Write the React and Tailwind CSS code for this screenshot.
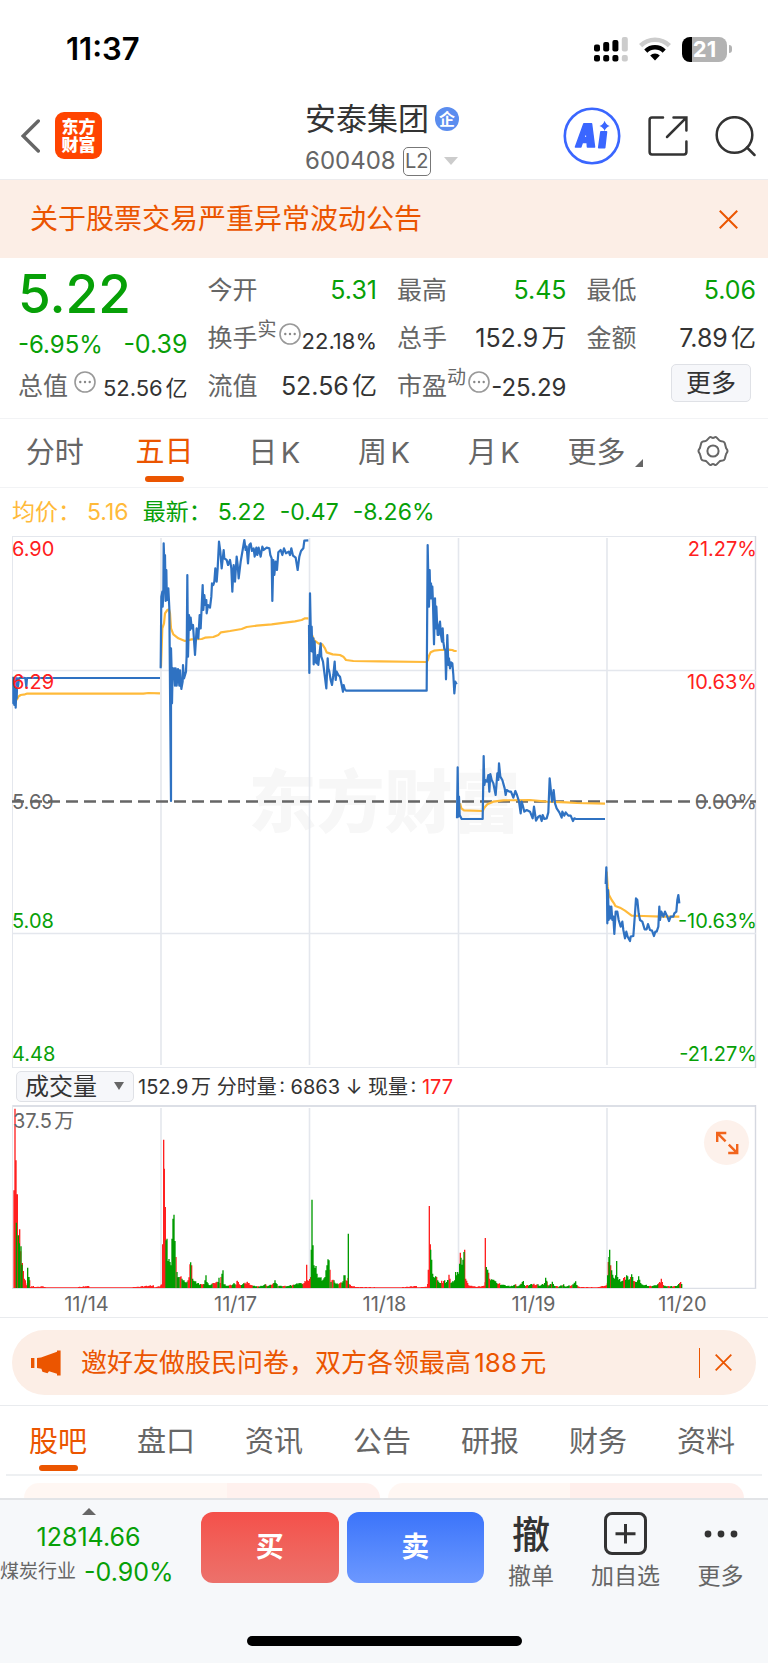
import React from "react";

const FONT = "font-['Inter','Noto_Sans_CJK_SC',sans-serif]";

/* Price lines, one entry per trading day. Units are thirds of a pixel. */
const DAYS = [
  {
    x: 0,
    y: 525,
    price:
      "40,455 40,535 43,460 43,540 47,458 47,548 50,470 50,520 52,460 54,485 57,460 62,458 76,459 79,485 81,459 480,459",
    average: "50,525 55,515 62,510 75,508 80,506 430,506 445,504 480,505",
  },
  {
    x: 0,
    y: 525,
    price:
      "482,430 484,215 487,200 488,245 490,205 491,55 494,150 495,90 497,228 499,135 500,190 502,225 505,190 508,250 511,600 513,828 513,370 515,440 516,535 518,430 521,440 522,430 525,482 527,430 530,482 534,432 538,482 540,436 544,492 548,470 549,420 552,460 558,440 560,390 562,150 564,395 567,270 570,315 572,278 575,310 579,300 585,390 590,310 595,340 599,270 602,310 608,180 610,255 613,210 616,240 619,225 620,265 624,240 630,248 634,215 636,175 640,180 643,170 646,130 650,170 653,130 657,50 661,80 665,130 671,75 673,100 680,105 684,120 690,105 694,130 697,200 701,120 705,170 710,95 713,120 716,160 722,110 728,75 733,45 737,75 740,65 744,115 748,60 752,55 756,78 761,70 764,95 769,68 772,90 776,68 782,95 787,65 791,75 800,68 808,70 811,90 815,100 817,228 820,105 823,150 827,110 831,135 835,82 842,75 847,90 852,70 858,85 866,80 870,90 874,70 879,92 887,98 893,135 898,95 903,78 910,70 913,47 925,46",
    average:
      "483,425 487,310 492,295 495,265 502,255 507,253 510,265 513,310 520,328 535,340 555,348 575,343 605,342 615,338 640,336 655,330 663,322 690,318 725,312 740,306 770,302 815,298 855,293 885,289 905,285 915,280 925,280",
  },
  {
    x: 300,
    y: 525,
    price:
      "27,300 28,444 30,205 32,300 33,378 35,305 37,380 40,340 41,418 44,350 46,410 50,415 53,390 55,420 58,390 62,355 64,395 69,410 74,450 79,490 83,400 85,430 88,440 92,465 96,480 100,450 104,410 107,465 110,440 115,450 120,455 125,480 129,500 131,480 134,492 138,497 380,497 383,60 385,160 387,245 389,135 391,220 393,175 395,220 397,185 399,235 402,358 405,220 407,310 409,245 411,290 413,330 416,330 418,300 420,290 423,330 426,350 428,310 430,350 433,372 436,375 438,463 442,330 445,420 447,400 450,430 453,412 457,415 460,450 463,505 466,470 470,478",
    average:
      "36,330 42,345 55,355 67,358 75,370 80,382 98,388 120,390 130,395 138,405 160,408 240,409 380,411 384,405 387,392 392,382 402,377 420,375 445,374 457,375 463,378 470,378",
  },
  {
    x: 300,
    y: 525,
    price:
      "471,880 473,727 475,875 477,815 479,870 485,882 548,882 551,693 553,780 556,765 561,770 565,750 568,800 571,747 575,765 580,775 587,810 592,745 595,765 597,715 601,755 607,765 614,790 617,810 620,795 628,800 633,800 640,818 646,798 651,810 657,830 662,865 665,830 668,840 673,860 680,855 690,860 698,880 702,845 708,887 715,875 720,872 725,888 728,870 733,882 740,880 745,862 749,760 752,790 756,830 761,795 765,835 770,850 778,862 785,878 787,860 793,872 797,862 805,872 812,872 819,888 823,880 828,882 915,882",
    average:
      "480,835 484,850 492,856 548,858 553,848 562,838 580,830 610,826 690,825 740,830 800,832 830,834 915,836",
  },
  {
    x: 440,
    y: 740,
    price:
      "497,432 499,382 501,460 502,550 504,450 506,540 509,500 511,535 514,500 517,540 520,530 523,582 527,515 532,515 536,540 542,560 547,545 550,570 555,595 559,575 563,590 570,603 572,590 580,588 585,520 588,475 592,480 596,520 600,540 607,545 614,568 620,568 624,552 630,570 636,572 642,588 646,575 650,575 655,560 658,500 660,540 664,515 670,530 675,515 682,530 687,543 692,530 700,530 703,520 709,515 712,480 715,465 718,490",
    average:
      "500,395 503,440 507,465 515,480 522,490 526,498 540,503 555,512 575,527 610,528 665,530 718,530",
  },
];

/* Volume outline: colour, position and height, in thirds of a pixel.
   r = red, g = green, m = alternating. */
const VOLUME =
  "r40:293 r43:538 r46:383 g47:196 r50:281 g53:158 r57:176 g61:125 r65:75 r68:51 r71:28 r74:23 r77:8 g81:61 g85:33 r87:23 r90:3 r98:6 r101:3 r127:5 r130:3 r150:2 r225:2 r264:6 r267:1 r380:1 r458:8 r461:2 r478:5 " +
  "r486:131 r489:445 r491:358 r494:243 g496:143 g499:148 g502:81 g508:78 g511:68 g514:148 g517:208 g520:220 r526:93 g529:48 g535:33 r538:33 r541:35 g544:28 g550:23 g553:18 r562:23 r568:71 g570:77 r573:68 g576:28 g582:20 m590:14 r600:12 g610:11 g613:23 g616:38 g619:18 m625:9 r640:15 g652:18 g655:31 r658:15 r661:33 g664:43 g667:53 g670:11 m680:7 g697:11 g700:15 r706:10 r710:22 r713:18 m720:9 r730:13 r740:19 r745:15 m755:7 g775:4 r795:11 m800:5 g820:15 g823:23 g826:15 m832:7 m860:6 g880:10 g895:15 r905:13 r910:15 r918:70 r921:23 " +
  "g932:115 g934:265 g937:128 g940:68 g946:66 g949:43 g958:31 g967:25 g973:33 g976:53 g979:68 g982:86 g985:83 r988:55 g991:18 r994:23 g1000:23 m1006:12 g1024:16 g1030:38 g1033:38 r1036:23 r1039:21 g1043:163 r1046:11 r1055:5 r1070:3 r1150:2 r1200:2 r1247:6 r1250:2 r1278:4 " +
  "r1283:55 r1286:246 r1289:131 g1290:115 g1293:85 g1296:43 g1302:31 r1308:33 g1311:23 g1317:15 r1323:22 m1326:15 g1332:23 m1335:15 g1342:23 r1345:40 r1348:28 g1351:15 g1362:23 g1365:48 g1371:48 g1374:43 g1377:73 r1379:106 g1381:91 g1387:85 g1390:108 r1392:115 r1395:28 r1401:15 r1404:8 r1425:4 r1450:6 r1454:150 g1457:63 g1461:55 r1464:46 r1467:28 g1470:23 g1476:25 g1479:25 m1488:15 g1510:9 g1530:5 r1545:11 m1549:5 g1562:12 g1568:21 m1572:6 r1600:13 m1603:8 g1612:11 m1616:6 g1632:15 g1635:31 r1639:19 m1643:5 g1655:19 m1660:7 m1675:4 g1689:11 m1693:4 g1718:10 g1725:20 m1729:8 r1737:3 r1790:2 r1817:8 " +
  "g1821:38 r1823:78 g1825:93 g1827:115 r1830:68 g1833:53 g1836:40 m1842:28 g1845:38 g1848:81 g1851:33 g1854:25 m1866:22 r1872:33 g1875:25 g1878:38 m1884:25 g1893:41 g1896:33 r1899:21 g1905:18 g1914:35 g1917:25 m1920:15 g1928:8 g1937:10 m1943:6 m1965:8 r1982:28 r1985:18 m1990:7 m2010:5 m2028:6 r2037:15 r2040:18 g2043:12";

function volumeBars() {
  const keys = VOLUME.split(" ").map((entry) => {
    const [x, h] = entry.slice(1).split(":").map(Number);
    return { kind: entry[0], x, h };
  });
  const bars = { r: "", g: "" };
  const add = (kind, x, h) => {
    bars[kind] += `M${x} 0v-${Math.max(2, Math.round(h))}h4v${Math.max(2, Math.round(h))}z`;
  };
  keys.forEach((key, i) => {
    const next = keys[i + 1];
    const end = next && next.x - key.x < 130 ? next.x : key.x + 1;
    for (let x = key.x, n = 0; x < end; x += 3, n += 1) {
      const t = (x - key.x) / (end - key.x);
      const h = n === 0 || !next ? key.h : key.h + (Math.min(next.h, key.h + 12) - key.h) * t;
      const wobble = n === 0 ? 1 : 0.8 + 0.1 * ((x * 7) % 4);
      const kind = key.kind === "m" ? ((x * 5) % 7 < 3 ? "r" : "g") : key.kind;
      add(kind, x, h * wobble);
    }
  });
  return bars;
}

const BARS = volumeBars();
const DIVIDERS = [161, 309.5, 458.5, 607];

function More() {
  return (
    <svg viewBox="0 0 22 22" className="size-[22px] shrink-0" fill="none" aria-hidden="true">
      <circle cx="11" cy="11" r="10" stroke="#999" strokeWidth="1.6" />
      <circle cx="6.3" cy="11" r="1.2" fill="#888" />
      <circle cx="11" cy="11" r="1.2" fill="#888" />
      <circle cx="15.7" cy="11" r="1.2" fill="#888" />
    </svg>
  );
}

function Close({ className }) {
  return (
    <svg viewBox="0 0 20 20" className={className} fill="none" stroke="#eb5500" strokeWidth="2.1" aria-hidden="true">
      <path d="M0.8 0.8 19.2 19.2M19.2 0.8 0.8 19.2" />
    </svg>
  );
}

function StatusBar() {
  return (
    <div className="flex h-[98px] items-center justify-between pr-9 pl-[66px]">
      <time className="text-[31px] leading-9 font-semibold text-black">11:37</time>
      <div className="flex items-center gap-[11px]">
        <svg viewBox="0 0 34 26" className="h-[26px] w-[34px]" aria-label="信号">
          <g fill="#000">
            <rect x="0" y="8.5" width="6" height="7" rx="2" />
            <rect x="9.2" y="6" width="6" height="9.5" rx="2" />
            <rect x="18.4" y="4" width="6" height="11.5" rx="2" />
            <rect x="0" y="19" width="6" height="6.5" rx="2" />
            <rect x="9.2" y="19" width="6" height="6.5" rx="2" />
            <rect x="18.4" y="19" width="6" height="6.5" rx="2" />
          </g>
          <g fill="#ccc">
            <rect x="27.8" y="1" width="6" height="14.5" rx="2" />
            <rect x="27.8" y="19" width="6" height="6.5" rx="2" />
          </g>
        </svg>
        <svg viewBox="0 0 32 24" className="h-6 w-8" fill="none" aria-label="无线网络">
          <path d="M1.6 8.6A20.5 20.5 0 0 1 30.4 8.6" stroke="#ccc" strokeWidth="4.6" />
          <path d="M6.8 14.1A13 13 0 0 1 25.2 14.1" stroke="#000" strokeWidth="4.4" />
          <path d="M16 23.5 11.2 18.6A6.8 6.8 0 0 1 20.8 18.6Z" fill="#000" />
        </svg>
        <div className="flex items-center gap-[2px]">
          <div className="flex h-[25px] w-[45px] items-center justify-center overflow-hidden rounded-lg bg-[linear-gradient(to_right,#000_10px,#b3b3b3_10px)]">
            <span className="text-[22px] leading-6 font-bold text-white">21</span>
          </div>
          <span className="h-2 w-[3px] rounded-r-full bg-[#b3b3b3]" />
        </div>
      </div>
    </div>
  );
}

function Header() {
  return (
    <header className="grid h-[82px] grid-cols-[1fr_auto_1fr] items-start border-b border-[#ececee] px-3">
      <div className="ml-[9px] flex items-center gap-[15px] pt-[14px]">
        <button type="button" aria-label="返回">
          <svg viewBox="0 0 19 34" className="h-[34px] w-[19px]" fill="none" stroke="#666" strokeWidth="3.4" strokeLinecap="round">
            <path d="M17.3 2 2.2 17 17.3 32" />
          </svg>
        </button>
        <div className="flex size-[47px] flex-col items-center justify-center rounded-[9px] bg-[#ff4400] text-[17px] leading-[18px] font-black text-white">
          <span>东方</span>
          <span>财富</span>
        </div>
      </div>
      <div className="flex flex-col pr-1">
        <h1 className="flex items-center gap-[6px] text-[31px] leading-[42px] text-[#333]">
          安泰集团
          <span className="flex size-6 items-center justify-center rounded-full bg-[#5b8def] text-[16px] leading-6 font-bold text-white">
            企
          </span>
        </h1>
        <button type="button" className="flex h-[42px] items-center gap-[7px] text-[24px] leading-7 text-[#666]">
          600408
          <span className="flex h-[29px] w-7 items-center justify-center rounded-[5px] border border-[#777] text-[20px]">L2</span>
          <svg viewBox="0 0 14 8" className="ml-[6px] h-2 w-[14px]" aria-hidden="true">
            <path d="M0 0H14L7 8Z" fill="#ccc" />
          </svg>
        </button>
      </div>
      <div className="flex items-center justify-end gap-[27px] pt-[9px]">
        <button type="button" aria-label="智能助手">
          <svg viewBox="0 0 58 58" className="size-[58px]" fill="none">
            <circle cx="29" cy="29" r="27.2" stroke="#3a66ff" strokeWidth="2.6" />
            <g fill="#3a66ff" stroke="#3a66ff" strokeLinejoin="round">
              <path
                d="M12.4 40 20.8 16.8H28.6L31.6 40H24.4L24.1 35.6H19.4L17.9 40ZM21 30.8H23.9L23.5 24Z"
                strokeWidth="1.4"
                fillRule="evenodd"
              />
              <path d="M38 24.8H43.4L41.6 40.6H35.8Z" strokeWidth="1.8" />
            </g>
            <path d="M41.6 13.7Q42.8 17.7 46.7 19Q42.8 20.3 41.6 24.1Q40.4 20.3 36.5 19Q40.4 17.7 41.6 13.7Z" fill="#3a66ff" />
          </svg>
        </button>
        <button type="button" aria-label="分享">
          <svg viewBox="0 0 40 40" className="size-10" fill="none" stroke="#333" strokeWidth="2.5" strokeLinecap="round">
            <path d="M15 1.6H4Q1.6 1.6 1.6 4V36Q1.6 38.4 4 38.4H36Q38.4 38.4 38.4 36V25.5M25.5 1.6H38.4V14.5M37.6 2.4 19 21" />
          </svg>
        </button>
        <button type="button" aria-label="搜索">
          <svg viewBox="0 0 41 41" className="size-[41px]" fill="none" stroke="#333" strokeWidth="2.5" strokeLinecap="round">
            <circle cx="19.5" cy="19" r="17.8" />
            <path d="M32 31.5 39.5 39" />
          </svg>
        </button>
      </div>
    </header>
  );
}

function Stat({ label, mark, more, value, tone, size }) {
  return (
    <div className="flex h-12 items-center justify-between whitespace-nowrap">
      <dt className="flex items-center text-[25px] text-[#666]">
        {label}
        {mark && <sup className="text-[19px] leading-6">{mark}</sup>}
        {more && (
          <span className={mark ? "mb-[10px] ml-[2px]" : "mb-[10px] ml-[6px]"}>
            <More />
          </span>
        )}
      </dt>
      <dd className={`${tone} ${size}`}>{value}</dd>
    </div>
  );
}

function Quote() {
  const green = "text-[#07a007]";
  const dark = "text-[#333]";
  return (
    <section className="grid grid-cols-4 gap-x-5 border-b border-[#f2f3f5] pt-[9px] pr-3 pb-[7px] pl-[18px]">
      <div>
        <div className={`h-[60px] text-[53px] leading-[54px] font-medium ${green}`}>5.22</div>
        <div className={`flex h-9 items-center justify-between ${green}`}>
          <span className="text-[24px]">-6.95%</span>
          <span className="text-[25px]">-0.39</span>
        </div>
        <dl>
          <Stat label="总值" more value="52.56亿" tone={dark} size="pt-[2px] text-[22px]" />
        </dl>
      </div>
      <dl>
        <Stat label="今开" value="5.31" tone={green} size="text-[25px]" />
        <Stat label="换手" mark="实" more value="22.18%" tone={dark} size="pt-1 text-[22px]" />
        <Stat label="流值" value="52.56亿" tone={dark} size="text-[25px]" />
      </dl>
      <dl>
        <Stat label="最高" value="5.45" tone={green} size="text-[25px]" />
        <Stat label="总手" value="152.9万" tone={dark} size="text-[25px]" />
        <Stat label="市盈" mark="动" more value="-25.29" tone={dark} size="pt-[2px] text-[24px]" />
      </dl>
      <div>
        <dl>
          <Stat label="最低" value="5.06" tone={green} size="text-[25px]" />
          <Stat label="金额" value="7.89亿" tone={dark} size="text-[25px]" />
        </dl>
        <div className="flex h-10 items-center justify-end pr-[5px]">
          <button type="button" className="h-[38px] w-20 rounded-[5px] border border-[#dfe1e6] bg-[#f6f7fa] text-[25px] leading-9 text-[#333]">
            更多
          </button>
        </div>
      </div>
    </section>
  );
}

function PeriodTabs() {
  return (
    <nav className="grid h-[69px] grid-cols-7 border-b border-[#f2f3f5] text-[29px] leading-[66px] text-[#666]">
      <button type="button">分时</button>
      <button type="button" className="flex flex-col items-center text-[#eb5500]">
        <span className="h-[57px]">五日</span>
        <span className="h-[6px] w-[39px] rounded-full bg-[#eb5500]" />
      </button>
      <button type="button">日K</button>
      <button type="button">周K</button>
      <button type="button">月K</button>
      <button type="button" className="flex items-center justify-center gap-[10px] pl-1">
        更多
        <svg viewBox="0 0 8 8" className="mt-5 size-2" aria-hidden="true">
          <path d="M8 0V8H0Z" fill="#666" />
        </svg>
      </button>
      <button type="button" aria-label="设置" className="flex items-center justify-center pb-1">
        <svg viewBox="0 0 32 32" className="size-8" fill="none" stroke="#666" strokeWidth="2">
          <path
            strokeLinejoin="round"
            d="M12.3 2.6Q13.3 1.6 14.5 2.4Q16 3.4 17.5 2.4Q18.7 1.6 19.7 2.6L22.3 5.4Q23 6.2 24.2 6.2Q27 6 27.8 8.2L28.8 12Q29 13.2 29.8 14.2Q31.2 16 29.8 17.8Q29 18.8 28.8 20L27.8 23.8Q27 26 24.2 25.8Q23 25.8 22.3 26.6L19.7 29.4Q18.7 30.4 17.5 29.6Q16 28.6 14.5 29.6Q13.3 30.4 12.3 29.4L9.7 26.6Q9 25.8 7.8 25.8Q5 26 4.2 23.8L3.2 20Q3 18.8 2.2 17.8Q0.8 16 2.2 14.2Q3 13.2 3.2 12L4.2 8.2Q5 6 7.8 6.2Q9 6.2 9.7 5.4Z"
          />
          <circle cx="16" cy="16" r="5.6" />
        </svg>
      </button>
    </nav>
  );
}

function PriceChart() {
  return (
    <figure className="relative mr-[11px] ml-3 h-[532px]">
      <div className="absolute inset-0 flex items-center justify-center text-[68px] leading-none font-black text-[#f7f7f7] select-none">
        东方财富
      </div>
      <svg viewBox="12 536 745 532" preserveAspectRatio="none" className="absolute inset-0 size-full" fill="none" aria-label="五日走势">
        <g stroke="#e4e7ed">
          <path d="M12 536.5H756M12 1067.5H756M12.5 536V1068" />
          <path d="M755.5 536V1068" stroke="#d5d8e0" strokeWidth="1.4" />
          <path d="M12 670.5H756M12 933.5H756" strokeWidth="1.4" />
          {DIVIDERS.map((x) => (
            <path key={x} d={`M${x} 538V1065`} strokeWidth="1.6" />
          ))}
        </g>
        <path d="M12 801.5H756" stroke="#666" strokeWidth="2.4" strokeDasharray="12 6" />
        {DAYS.map((day, i) => (
          <g key={i} transform={`translate(${day.x} ${day.y}) scale(0.333333)`} strokeLinejoin="round">
            <polyline points={day.average} stroke="#ffba3a" strokeWidth="6.6" />
            <polyline points={day.price} stroke="#2f72c2" strokeWidth="6.6" />
          </g>
        ))}
      </svg>
      <div className="absolute inset-0 text-[20px] leading-[26px] text-[#ff2020]">
        <span className="absolute top-0 left-0">6.90</span>
        <span className="absolute top-0 right-0">21.27%</span>
        <span className="absolute top-[133px] left-0">6.29</span>
        <span className="absolute top-[133px] right-0">10.63%</span>
        <span className="absolute top-[253px] left-0 text-[#666]">5.69</span>
        <span className="absolute top-[253px] right-0 text-[#666]">0.00%</span>
        <span className="absolute top-[372px] left-0 text-[#07a007]">5.08</span>
        <span className="absolute top-[372px] right-0 text-[#07a007]">-10.63%</span>
        <span className="absolute top-[505px] left-0 text-[#07a007]">4.48</span>
        <span className="absolute top-[505px] right-0 text-[#07a007]">-21.27%</span>
      </div>
    </figure>
  );
}

function VolumeChart() {
  return (
    <section>
      <div className="flex h-[37px] items-center pl-4 text-[20px] text-[#333]">
        <div className="relative">
          <select
            aria-label="指标"
            className="block h-[31px] w-[118px] appearance-none rounded-[5px] border border-[#dfe1e6] bg-[#f6f7fa] pl-2 text-[24px] leading-7 text-[#333]"
          >
            <option>成交量</option>
          </select>
          <svg viewBox="0 0 10 8" className="pointer-events-none absolute top-[11px] right-[10px] h-2 w-[10px]" aria-hidden="true">
            <path d="M0 0H10L5 8Z" fill="#666" />
          </svg>
        </div>
        <p className="ml-1 whitespace-pre">
          152.9万 分时量: 6863 ↓ 现量: <span className="text-[#ff2020]">177</span>
        </p>
      </div>
      <figure className="relative mr-[11px] ml-3 h-[184px]">
        <svg viewBox="12 1105 745 184" preserveAspectRatio="none" className="absolute inset-0 size-full" fill="none" aria-label="成交量">
          <g stroke="#e4e7ed">
            <path d="M12 1106H756" stroke="#dcdfe6" strokeWidth="2" />
            <path d="M12.5 1105V1289" />
            <path d="M755.5 1105V1289" stroke="#d5d8e0" strokeWidth="1.4" />
            {DIVIDERS.map((x) => (
              <path key={x} d={`M${x} 1108V1288`} strokeWidth="1.6" />
            ))}
            <path d="M12 1288.4H756" stroke="#dcdfe6" strokeWidth="1.4" />
          </g>
          <g transform="translate(0 1288) scale(0.333333)">
            <path d={BARS.r} fill="#ff2020" />
            <path d={BARS.g} fill="#009b00" />
          </g>
        </svg>
        <span className="absolute top-1 left-[1px] text-[20px] leading-6 text-[#666]">37.5万</span>
        <button
          type="button"
          aria-label="全屏"
          className="absolute top-[15px] right-2 flex size-[45px] items-center justify-center rounded-full bg-[#fdf1eb]"
        >
          <svg viewBox="0 0 24 24" className="size-6" fill="none" stroke="#f1641c" strokeWidth="2.4">
            <path d="M11.3 2H2.2V11M2.6 2.4 10.6 10.4M22.2 13V22H13.2M21.8 21.6 13.8 13.6" />
          </svg>
        </button>
      </figure>
      <ol className="mr-[11px] ml-3 grid h-[28px] grid-cols-5 text-center text-[20px] leading-[30px] text-[#666]">
        <li>11/14</li>
        <li>11/17</li>
        <li>11/18</li>
        <li>11/19</li>
        <li>11/20</li>
      </ol>
    </section>
  );
}

function SurveyBanner() {
  return (
    <div className="border-y border-[#e9ebee] px-3 pt-[12px] pb-[10px]">
      <div className="flex h-[65px] items-center rounded-full bg-[#fceee6] pr-6 pl-[19px] text-[#eb5500]">
        <svg viewBox="0 0 30 26" className="h-[26px] w-[30px]" fill="#eb5500" aria-hidden="true">
          <rect x="0" y="8" width="3.4" height="10" />
          <path d="M6 8 10 7.4 26 1.8V0.5H29.6V25.6H26V23.8L18 21.3 16.5 23.3 11.4 21.8 10.4 18.8 6 18Z" />
        </svg>
        <a href="#survey" className="ml-5 text-[26px] leading-9">
          邀好友做股民问卷，双方各领最高188元
        </a>
        <span className="mr-[15px] ml-auto h-[30px] w-px bg-[#eb5500]" />
        <button type="button" aria-label="关闭">
          <Close className="size-[17px]" />
        </button>
      </div>
    </div>
  );
}

function ContentTabs() {
  return (
    <section>
      <nav className="grid h-[68px] grid-cols-7 pr-2 pl-1 text-[29px] leading-[72px] text-[#666]">
        <button type="button" className="flex flex-col items-center text-[#eb5500]">
          <span className="h-[59px]">股吧</span>
          <span className="h-[6px] w-[39px] rounded-full bg-[#eb5500]" />
        </button>
        <button type="button" className="flex justify-center">盘口</button>
        <button type="button" className="flex justify-center">资讯</button>
        <button type="button" className="flex justify-center">公告</button>
        <button type="button" className="flex justify-center">研报</button>
        <button type="button" className="flex justify-center">财务</button>
        <button type="button" className="flex justify-center">资料</button>
      </nav>
      <div className="mx-[6px] h-[2px] bg-[#eef0f2]" />
      <div className="grid h-[22px] grid-cols-2 gap-2 overflow-hidden px-6 pt-[7px]">
        <div className="h-[15px] rounded-t-[18px] bg-[linear-gradient(to_right,#fff7f3_57%,#fff1ee_57%)]" />
        <div className="h-[15px] rounded-t-[18px] bg-[linear-gradient(to_right,#fff7f3_51%,#ffefec_51%)]" />
      </div>
    </section>
  );
}

function ActionBar() {
  return (
    <footer className="border-t-2 border-[#e2e4e7] bg-[#f6f8fa]">
      <div className="flex h-[96px] items-start pt-3">
        <button type="button" className="flex w-[177px] flex-col items-center text-[25px] text-[#07a007]">
          <svg viewBox="0 0 14 7" className="-mt-1 h-[7px] w-[14px]" aria-hidden="true">
            <path d="M7 0 14 7H0Z" fill="#666" />
          </svg>
          <span className="mt-[5px] leading-[34px]">12814.66</span>
          <span className="flex items-center gap-2 self-start leading-9 whitespace-nowrap">
            <span className="text-[19px] text-[#666]">煤炭行业</span>
            -0.90%
          </span>
        </button>
        <div className="ml-6 grid flex-1 grid-cols-2 gap-2 text-[28px] leading-[71px] font-bold text-white">
          <button type="button" className="h-[71px] rounded-xl bg-linear-to-b from-[#f4504a] to-[#ec716b]">
            买
          </button>
          <button type="button" className="h-[71px] rounded-xl bg-linear-to-b from-[#3b74fa] to-[#6c98ff]">
            卖
          </button>
        </div>
        <div className="grid grid-cols-[94px_95px_95px] text-[23px] leading-8 text-[#666]">
          <button type="button" className="flex flex-col items-center">
            <span className="h-12 text-[38px] leading-[44px] font-medium text-[#333]">撤</span>
            撤单
          </button>
          <button type="button" className="flex flex-col items-center">
            <span className="flex h-12 items-start">
              <svg viewBox="0 0 43 43" className="size-[43px]" fill="none" stroke="#333" aria-hidden="true">
                <rect x="1.5" y="1.5" width="40" height="40" rx="6.5" strokeWidth="3" />
                <path d="M21.5 12V31.5M11.5 21.8H31.5" strokeWidth="3" />
              </svg>
            </span>
            加自选
          </button>
          <button type="button" className="flex flex-col items-center">
            <span className="flex h-12 items-start pt-[18px]">
              <svg viewBox="0 0 34 8" className="h-2 w-[34px]" fill="#333" aria-hidden="true">
                <circle cx="4" cy="4" r="3.4" />
                <circle cx="17" cy="4" r="3.4" />
                <circle cx="30" cy="4" r="3.4" />
              </svg>
            </span>
            更多
          </button>
        </div>
      </div>
      <div className="flex h-[67px] items-start justify-center pt-10">
        <div className="h-[10px] w-[275px] rounded-full bg-black" />
      </div>
    </footer>
  );
}

export default function App() {
  return (
    <main className={`${FONT} bg-white [text-autospace:normal]`} lang="zh-CN">
      <StatusBar />
      <Header />
      <div className="flex h-[78px] items-center justify-between bg-[#fceee6] pr-[30px] pl-[30px]">
        <a href="#notice" className="text-[28px] leading-9 text-[#eb5500]">
          关于股票交易严重异常波动公告
        </a>
        <button type="button" aria-label="关闭">
          <Close className="size-[19px]" />
        </button>
      </div>
      <Quote />
      <PeriodTabs />
      <div className="flex h-[48px] items-center gap-[14px] pl-3 text-[23px] text-[#07a007]">
        <p className="flex gap-[6px] text-[#ffba3a]">
          <span>均价：</span>
          <span>5.16</span>
        </p>
        <p className="flex gap-[6px]">
          <span>最新：</span>
          <span>5.22</span>
        </p>
        <span>-0.47</span>
        <span>-8.26%</span>
      </div>
      <PriceChart />
      <VolumeChart />
      <SurveyBanner />
      <ContentTabs />
      <ActionBar />
    </main>
  );
}
